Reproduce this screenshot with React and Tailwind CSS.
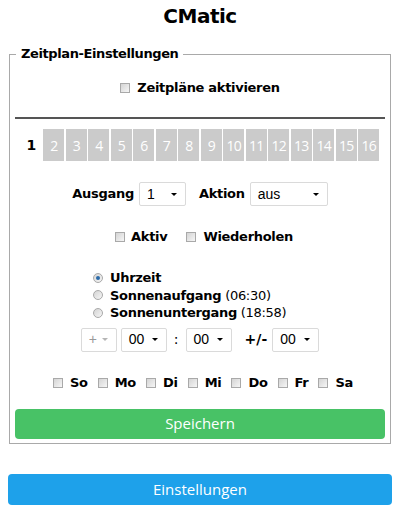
const Check = () => (
  <span className="inline-block w-[10px] h-[10px] shrink-0 border border-[#a9a9a9] bg-linear-to-br from-[#d4d4d4] to-[#f6f6f6]" />
);

const Radio = ({ checked }) => (
  <span className="flex items-center justify-center w-[10px] h-[10px] shrink-0 rounded-full border border-[#a9a9a9] bg-linear-to-br from-[#d4d4d4] to-[#f6f6f6]">
    {checked && <span className="w-[4px] h-[4px] rounded-full bg-[#2a6aa8]" />}
  </span>
);

const Select = ({ value, w, disabled }) => (
  <div
    className={`flex items-center justify-between h-[24px] border border-[#dadada] rounded-[2px] bg-white pl-[7px] pr-[8px] ${w}`}
  >
    <span
      className={`text-[14px] font-['Liberation_Sans',sans-serif] ${disabled ? "text-[#999]" : "text-black"}`}
    >
      {value}
    </span>
    <span
      className={`w-0 h-0 border-l-[3px] border-r-[3px] border-t-[3px] border-l-transparent border-r-transparent ${
        disabled ? "border-t-[#b5b5b5]" : "border-t-black"
      }`}
    />
  </div>
);

const tabs = [2, 3, 4, 5, 6, 7, 8, 9, 10, 11, 12, 13, 14, 15, 16];
const days = ["So", "Mo", "Di", "Mi", "Do", "Fr", "Sa"];

const App = () => {
  return (
    <div className="w-[400px] h-[513px] bg-white font-['DejaVu_Sans',sans-serif] text-black">
      <h1 className="pt-[3px] text-center text-[20px] leading-[26px] font-bold tracking-[-0.5px] h-[46px]">
        CMatic
      </h1>

      <fieldset className="mx-[9px] border border-[#a9a9a9] px-[5px] pb-[4px]">
        <legend className="ml-[1px] px-[5px] text-[13px] leading-[16px] font-bold tracking-[-0.4px]">
          Zeitplan-Einstellungen
        </legend>

        <div className="mt-[16px] h-[20px] flex items-center justify-center gap-[7px]">
          <Check />
          <span className="text-[13px] font-bold tracking-[-0.3px]">Zeitpläne aktivieren</span>
        </div>

        <div className="mt-[19px] h-[2px] bg-[#555]" />

        <div className="mt-[10px] flex justify-center gap-[1.5px]">
          <div className="w-[21px] h-[32px] flex items-center justify-center text-[14px] font-bold">
            1
          </div>
          {tabs.map((t) => (
            <div
              key={t}
              className="w-[21px] h-[32px] flex items-center justify-center bg-[#cbcbcb] text-white text-[14px] tracking-[-0.8px] font-['Open_Sans',sans-serif]"
            >
              {t}
            </div>
          ))}
        </div>

        <div className="mt-[21px] flex items-center justify-center">
          <span className="text-[13px] font-bold tracking-[-0.3px] mr-[5px]">Ausgang</span>
          <Select value="1" w="w-[47px]" />
          <span className="text-[13px] font-bold tracking-[-0.3px] ml-[13px] mr-[5px]">Aktion</span>
          <Select value="aus" w="w-[78px]" />
        </div>

        <div className="mt-[21px] h-[20px] flex items-center justify-center pl-[8px]">
          <Check />
          <span className="ml-[6px] text-[13px] font-bold tracking-[-0.3px]">Aktiv</span>
          <span className="ml-[19px]">
            <Check />
          </span>
          <span className="ml-[7px] text-[13px] font-bold tracking-[-0.3px]">Wiederholen</span>
        </div>

        <div className="mt-[22px] pl-[78px] text-[13px] leading-[17.5px] tracking-[-0.3px]">
          <div className="flex items-center gap-[7px]">
            <Radio checked />
            <span className="font-bold">Uhrzeit</span>
          </div>
          <div className="flex items-center gap-[7px]">
            <Radio />
            <span>
              <span className="font-bold">Sonnenaufgang</span> (06:30)
            </span>
          </div>
          <div className="flex items-center gap-[7px]">
            <Radio />
            <span>
              <span className="font-bold">Sonnenuntergang</span> (18:58)
            </span>
          </div>
        </div>

        <div className="mt-[6px] flex items-center justify-center">
          <Select value="+" w="w-[36px]" disabled />
          <span className="ml-[4px]" />
          <Select value="00" w="w-[46px]" />
          <span className="mx-[7px] text-[14px]">:</span>
          <Select value="00" w="w-[46px]" />
          <span className="ml-[13px] mr-[5px] text-[14px] font-bold">+/-</span>
          <Select value="00" w="w-[47px]" />
        </div>

        <div className="mt-[21px] h-[20px] flex items-center justify-center pl-[6px]">
          {days.map((d) => (
            <div key={d} className="flex items-center gap-[7px] mx-[5px]">
              <Check />
              <span className="text-[13px] font-bold tracking-[-0.3px]">{d}</span>
            </div>
          ))}
        </div>

        <button className="mt-[16px] w-full h-[30px] rounded-[4px] bg-[#48c266] text-white text-[15px] font-['Open_Sans',sans-serif]">
          Speichern
        </button>
      </fieldset>

      <div className="px-[8px] mt-[30px]">
        <button className="w-full h-[31px] rounded-[4px] bg-[#1ea1ea] text-white text-[15px] font-['Open_Sans',sans-serif]">
          Einstellungen
        </button>
      </div>
    </div>
  );
};

export default App;
